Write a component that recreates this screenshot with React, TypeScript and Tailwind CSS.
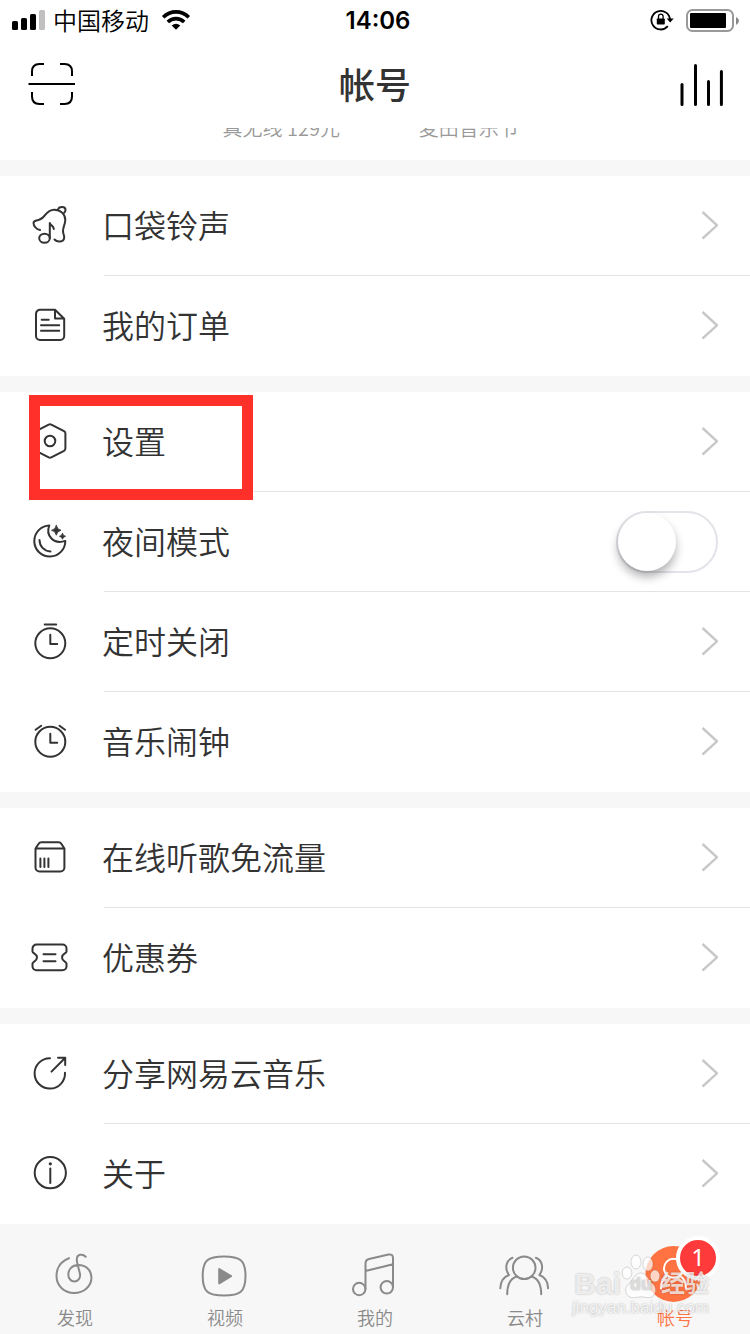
import { useState, type ReactNode } from "react";

type Item = { label: string; icon: ReactNode; toggle?: boolean };

const groups: Item[][] = [
  [
    {
      label: "口袋铃声",
      icon: (
        <>
          <path d="M10 25C7 24.5 3.5 21.5 3.5 18C3.5 15.5 6 15.5 8.5 15C16 13.5 15 5 24 4.7C31 4.5 35.5 10 35.3 15C35 20 33 22 33 26C33 29 34.3 30 34.2 32.5C34 37.5 27 37.5 24.5 34.5" />
          <path d="M28 4.6C29 .9 35.5 1 35.5 5C35.5 6 35 7 34.2 7.8" />
          <ellipse cx="14.5" cy="33.3" rx="5.3" ry="4.5" />
          <path d="M19.8 33V18C20.5 21 23.8 20.5 23.8 24" />
        </>
      ),
    },
    {
      label: "我的订单",
      icon: (
        <>
          <path d="M25 4.8H10A4 4 0 0 0 6 8.8V31a4 4 0 0 0 4 4H30.2a4 4 0 0 0 4-4V13.8L25 4.8V13.5H34" />
          <path d="M11.7 14.8H18.7M11 20.2H29.2M11 25.8H29.2" />
        </>
      ),
    },
  ],
  [
    {
      label: "设置",
      icon: (
        <>
          <path d="M18.7 3.6Q20 2.9 21.3 3.6L34 10.2Q35.4 11 35.4 12.5V27.5Q35.4 29 34 29.8L21.3 36.4Q20 37.1 18.7 36.4L6 29.8Q4.6 29 4.6 27.5V12.5Q4.6 11 6 10.2Z" />
          <circle cx="20" cy="20" r="5.3" />
        </>
      ),
    },
    {
      label: "夜间模式",
      toggle: true,
      icon: (
        <>
          <path d="M19.3 4.5A15.5 15.5 0 1 0 35.3 19.9C23 24 15.5 14 19.3 4.5Z" />
          <path d="M9.5 19C9.5 25 14 30 20.5 30.5" />
          <path
            d="M26.3 4.5Q27 8.6 31 9.3Q27 10 26.3 14.2Q25.6 10 21.6 9.3Q25.6 8.6 26.3 4.5ZM32.5 12.5Q33 15 35.5 15.3Q33 15.8 32.5 18.2Q32 15.8 29.5 15.3Q32 15 32.5 12.5Z"
            fill="currentColor"
            strokeWidth=".9"
          />
        </>
      ),
    },
    {
      label: "定时关闭",
      icon: (
        <>
          <circle cx="20.3" cy="22.3" r="15" />
          <path d="M14.7 3.4H26.2M20.3 13.8V23H27.2" />
        </>
      ),
    },
    {
      label: "音乐闹钟",
      icon: (
        <>
          <circle cx="20.3" cy="20.8" r="15" />
          <path d="M20.3 12.8V21.7H27.2M5.6 8.8L11.2 4.8M29.5 4.8L35 8.8" />
        </>
      ),
    },
  ],
  [
    {
      label: "在线听歌免流量",
      icon: (
        <>
          <path d="M11.5 5.2H28.5Q30.5 5.2 31.5 7L34.4 11.5V30.5a4 4 0 0 1-4 4H9.5a4 4 0 0 1-4-4V11.5L8.5 7Q9.5 5.2 11.5 5.2ZM5.5 11.5H34.4" />
          <path d="M10.4 21.5V30M14.4 21.5V30M18.4 21.5V30" />
        </>
      ),
    },
    {
      label: "优惠券",
      icon: (
        <>
          <path d="M6.5 7.6H32.5a4 4 0 0 1 4 4V14.5C36.5 16.6 32 16.5 32 20.5C32 24.5 36.5 24.4 36.5 26.5V29.3a4 4 0 0 1-4 4H6.5a4 4 0 0 1-4-4V26.5C2.5 24.4 7 24.5 7 20.5C7 16.5 2.5 16.6 2.5 14.5V11.6a4 4 0 0 1 4-4Z" />
          <path d="M13.5 17.2H25.5M13.5 24.2H25.5" />
        </>
      ),
    },
  ],
  [
    {
      label: "分享网易云音乐",
      icon: (
        <>
          <path d="M20 5.2A15.2 15.2 0 1 0 35 19.8" />
          <path d="M21.5 18.6L35 5M28 4.8H35.2V12" />
        </>
      ),
    },
    {
      label: "关于",
      icon: (
        <>
          <circle cx="20.3" cy="19.7" r="15.6" />
          <circle cx="20.3" cy="10.8" r="1.6" fill="currentColor" stroke="none" />
          <path d="M20.3 15.5V30" />
        </>
      ),
    },
  ],
];

const tabs: { label: string; icon: ReactNode; active?: boolean }[] = [
  {
    label: "发现",
    icon: (
      <path d="M24 8.3C15 11.5 11.5 19 11.5 26C11.5 36 19.5 43 29 43C39 43 46.5 36 46.5 27.5C46.5 20 40.5 15 33.5 15C27 15 23.3 19.5 23.3 24.5C23.3 28.5 26 31.5 29.3 31.5C33 31.5 35.5 28 35 24.5C34.5 20 31.8 14 31.8 9.5C31.8 4 37.5 3.5 40.7 6.7" />
    ),
  },
  {
    label: "视频",
    icon: (
      <>
        <path d="M29 6.5C45 6.5 50.5 10 50.5 26C50.5 42 45 45.5 29 45.5C13 45.5 7.7 42 7.7 26C7.7 10 13 6.5 29 6.5Z" />
        <path d="M24.2 19L36 26.2L24.2 33.3Z" fill="currentColor" />
      </>
    ),
  },
  {
    label: "我的",
    icon: (
      <>
        <circle cx="14.2" cy="39" r="6.2" />
        <circle cx="41.8" cy="37.3" r="6.2" />
        <path d="M20.5 39V13.5Q20.5 9.8 24 9L43.5 4.5Q48 3.8 48 8V37.3M20.5 21L48 14.3" />
      </>
    ),
  },
  {
    label: "云村",
    icon: (
      <>
        <circle cx="29.2" cy="17.7" r="11.3" />
        <path d="M12.2 44.3C12.2 35 15 28.5 22 26.5M46.2 44.3C46.2 35 43.4 28.5 36.4 26.5M17.5 7.8C11.5 10 9 18 14 25C8.5 27 5.5 32 5.3 38.3M40.9 7.8C46.9 10 49.4 18 44.4 25C49.9 27 52.9 32 53.1 38.3" />
      </>
    ),
  },
  {
    label: "帐号",
    active: true,
    icon: (
      <>
        <circle cx="28.5" cy="24" r="28" fill="#ff7342" stroke="none" />
        <g stroke="#fff">
          <circle cx="28.5" cy="18.3" r="9.5" />
          <path d="M16 38.5C16 32 18.5 27.5 22.5 25.8M41 38.5C41 32 38.5 27.5 34.5 25.8" />
        </g>
      </>
    ),
  },
];

function StatusBar() {
  return (
    <div className="grid h-10 grid-cols-3 items-center pl-3 pr-[10px] text-black">
      <div className="flex items-center gap-2">
        <svg className="h-5 w-[33px]" viewBox="0 0 33 20" aria-hidden="true">
          <rect x="0" y="11" width="6" height="9" rx="1.5" />
          <rect x="9" y="8" width="6" height="12" rx="1.5" />
          <rect x="18" y="4" width="6" height="16" rx="1.5" />
          <rect x="27" y="0" width="6" height="20" rx="1.5" fill="#c0c0c0" />
        </svg>
        <span className="text-2xl font-[350] leading-8">中国移动</span>
        <svg className="ml-1 h-5 w-[30px]" viewBox="-1 0 30 20" aria-hidden="true">
          <g fill="none" stroke="#000" strokeWidth="3.6">
            <path d="M1.2 7.3C8.5 .1 19.5 .1 26.8 7.3" />
            <path d="M5.8 12C10.5 7.5 17.5 7.5 22.2 12" />
          </g>
          <path d="M9.7 15.5Q14 12 18.3 15.5L14 19.8Z" />
        </svg>
      </div>
      <time className="pl-1 pt-0.5 text-center font-['Inter','Noto_Sans_CJK_SC',sans-serif] text-2xl font-semibold">
        14:06
      </time>
      <div className="flex items-center justify-end gap-3">
        <svg className="h-[22px] w-6" viewBox="0 0 24 22" aria-hidden="true">
          <path d="M20 11A9.3 9.3 0 1 0 17.8 17.2" fill="none" stroke="#000" strokeWidth="1.8" />
          <path d="M16.7 9.5H23.7L20.2 13.5Z" />
          <rect x="6.8" y="9.5" width="8" height="6" rx=".8" />
          <path d="M8.5 10V7.5a2.3 2.3 0 0 1 4.6 0V10" fill="none" stroke="#000" strokeWidth="1.3" />
        </svg>
        <svg className="h-6 w-[54px]" viewBox="0 0 54 24" aria-hidden="true">
          <rect x="1" y="2" width="46" height="21" rx="5.5" fill="none" stroke="#999" strokeWidth="2" />
          <rect x="4" y="5" width="36" height="15" rx="1" />
          <path d="M50 9Q53 10.5 53 12.8T50 17Z" fill="#888" />
        </svg>
      </div>
    </div>
  );
}

function Header() {
  return (
    <header className="flex h-[88px] items-center justify-between px-[27px] text-black">
      <button type="button" aria-label="扫一扫">
        <svg className="h-11 w-12" viewBox="27 62 48 44" fill="none" stroke="currentColor" strokeWidth="2">
          <path d="M32 76V71.5Q32 64 39.5 64H44M60 64H64.5Q72 64 72 71.5V76M72 92V96.5Q72 104 64.5 104H60M44 104H39.5Q32 104 32 96.5V92M28.5 84H75" />
        </svg>
      </button>
      <h1 className="pb-0.5 text-4xl font-medium text-[#333]">帐号</h1>
      <button type="button" aria-label="正在播放">
        <svg
          className="h-11 w-12"
          viewBox="675 62 48 44"
          fill="none"
          stroke="currentColor"
          strokeWidth="3"
          strokeLinecap="round"
        >
          <path d="M682 84.5V104.5M695.5 65.5V104.5M708.5 81.5V104.5M721.4 71.5V104.5" />
        </svg>
      </button>
    </header>
  );
}

function Row({ item }: { item: Item }) {
  const [on, setOn] = useState(false);
  const lead = (
    <>
      <svg
        className="h-10 w-10 shrink-0"
        viewBox="0 0 40 40"
        fill="none"
        stroke="currentColor"
        strokeWidth="2"
        strokeLinecap="round"
        strokeLinejoin="round"
        aria-hidden="true"
      >
        {item.icon}
      </svg>
      <span className="flex-1 pb-0.5 text-left">{item.label}</span>
    </>
  );
  const rowClass =
    "flex h-[99px] w-full items-center gap-8 pb-px pl-[30px] pr-8 text-[32px] font-[350] leading-10 text-[#333]";
  return (
    <li className="group">
      {item.toggle ? (
        <label className={rowClass}>
          {lead}
          <input
            type="checkbox"
            role="switch"
            checked={on}
            onChange={() => setOn(!on)}
            className="mt-0.5 h-[62px] w-[102px] appearance-none rounded-full border-2 border-[#e3e3e9] bg-white before:block before:size-[58px] before:rounded-full before:bg-white before:shadow-[0_6px_10px_rgba(0,0,0,0.3)] checked:bg-[#4cd964] checked:before:ml-10"
          />
        </label>
      ) : (
        <button type="button" className={rowClass}>
          {lead}
          <svg
            className="h-8 w-[18px] shrink-0"
            viewBox="0 0 18 32"
            fill="none"
            stroke="#c8c8c8"
            strokeWidth="2.4"
            aria-hidden="true"
          >
            <path d="M2.5 3L17 16.3L2.5 29.5" />
          </svg>
        </button>
      )}
      <div className="ml-[104px] h-px bg-[#e4e4e4] group-last:bg-transparent" />
    </li>
  );
}

function Watermark() {
  return (
    <div
      aria-hidden="true"
      className="pointer-events-none absolute right-[41px] top-[26px] flex flex-col items-end font-['Liberation_Sans','Noto_Sans_CJK_SC',sans-serif] text-white/75 [text-shadow:0_0_2px_rgba(0,0,0,0.3)]"
    >
      <div className="flex h-[50px] items-end">
        <span className="text-[30px] font-bold leading-8">Bai</span>
        <div className="relative flex h-12 w-10 items-end justify-center pb-2">
          <svg
            className="absolute inset-0 h-12 w-10"
            viewBox="0 0 40 48"
            fill="#fff"
            fillOpacity=".7"
            stroke="#000"
            strokeOpacity=".14"
          >
            <ellipse cx="6" cy="21" rx="4.8" ry="6" />
            <ellipse cx="15" cy="10" rx="5" ry="7" />
            <ellipse cx="27" cy="12" rx="5" ry="7" />
            <ellipse cx="34" cy="24" rx="4.8" ry="6" />
            <path d="M20 21C26 21 27 28 32 32C38 38 33 47 26 45.5Q20 44 14 45.5C6 47 1 38 8 31.5C12 28 14 21 20 21Z" />
          </svg>
          <span className="relative text-lg font-bold leading-4 text-[#ddd]">du</span>
        </div>
        <span className="text-2xl font-bold leading-8">经验</span>
      </div>
      <span className="text-[17px] leading-4">jingyan.baidu.com</span>
    </div>
  );
}

export default function App() {
  return (
    <div lang="zh-CN" className="flex min-h-screen flex-col bg-white font-['Noto_Sans_CJK_SC',sans-serif]">
      <StatusBar />
      <Header />
      <main className="flex-1 bg-[#f7f7f7]">
        <div className="grid h-8 grid-cols-4 content-end overflow-hidden bg-white pb-[22px] text-center text-xl font-[350] leading-5 text-[#999]">
          <span className="col-start-2">真无线 129元</span>
          <span>麦田音乐节</span>
        </div>
        {groups.map((items, index) => (
          <section key={items[0].label} className="relative mt-4 bg-white">
            <ul>
              {items.map((item) => (
                <Row key={item.label} item={item} />
              ))}
            </ul>
            {index === 1 && (
              <div className="pointer-events-none absolute left-[29px] top-[3px] h-[105px] w-56 border-[11px] border-[#ff3029]" />
            )}
          </section>
        ))}
      </main>
      <nav className="relative grid grid-cols-5 bg-[#f7f7f7] pb-[5px] pt-[26px]">
        {tabs.map((tab) => (
          <a
            key={tab.label}
            href="#"
            aria-current={tab.active ? "page" : undefined}
            className="flex flex-col items-center gap-[7px] text-lg font-[350] leading-6 text-[#8a8a8a] aria-[current=page]:text-[#ff7342]"
          >
            <span className="relative">
              <svg
                className="h-12 w-[60px] overflow-visible"
                viewBox="0 0 60 48"
                fill="none"
                stroke="currentColor"
                strokeWidth="2"
                strokeLinecap="round"
                strokeLinejoin="round"
                aria-hidden="true"
              >
                {tab.icon}
              </svg>
              {tab.active && (
                <span className="absolute -right-[15px] -top-[14px] flex size-11 items-center justify-center rounded-full border-4 border-white bg-[#ff3a3a] pb-0.5 font-['Noto_Sans',sans-serif] text-2xl font-normal text-white">
                  1
                </span>
              )}
            </span>
            {tab.label}
          </a>
        ))}
        <Watermark />
      </nav>
    </div>
  );
}
